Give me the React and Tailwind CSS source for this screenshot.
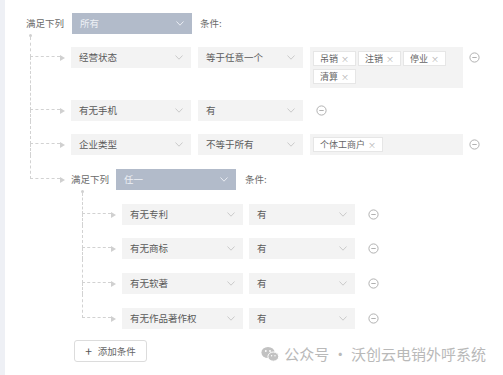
import React from "react";

const font = "font-['Noto_Sans_CJK_SC','Noto_Sans',sans-serif]";

function Chevron({ color = "#c6c6c6" }) {
  return (
    <svg width="8" height="5" viewBox="0 0 8 5">
      <polyline points="0.5,0.5 4,4.2 7.5,0.5" fill="none" stroke={color} strokeWidth="0.9" />
    </svg>
  );
}

function Select({ className, text, blue }) {
  return (
    <div
      className={`flex h-[21px] shrink-0 items-center justify-between pl-[8px] pr-[8px] text-[9.5px] ${
        blue ? "bg-[#b2bbca] text-[#eef1f6]" : "bg-[#f3f3f3] text-[#5a5a5a]"
      } ${className}`}
    >
      <span>{text}</span>
      <Chevron color={blue ? "#eef1f6" : "#c6c6c6"} />
    </div>
  );
}

function Minus() {
  return (
    <svg width="11" height="11" viewBox="0 0 11 11" className="shrink-0">
      <circle cx="5.5" cy="5.5" r="4.6" fill="none" stroke="#a8a8a8" strokeWidth="0.9" />
      <line x1="3.3" y1="5.5" x2="7.7" y2="5.5" stroke="#a8a8a8" strokeWidth="0.9" />
    </svg>
  );
}

function Tag({ text }) {
  return (
    <span className="inline-flex h-[15px] items-center gap-[3px] border border-[#e6e6e6] bg-white px-[6px] text-[9px] text-[#666]">
      {text}
      <span className="text-[8px] text-[#b0b0b0]">×</span>
    </span>
  );
}

function Arrow() {
  return (
    <div className="flex h-[21px] w-[5px] shrink-0 items-center">
      <svg width="5" height="6" viewBox="0 0 5 6">
        <polygon points="0,0 5,3 0,6" fill="#d0d0d0" />
      </svg>
    </div>
  );
}

// one branch of the tree: elbow connector, arrow, then the content
function Branch({ gap, last, lineW, children }) {
  return (
    <div className="flex">
      <div className={`flex shrink-0 flex-col ${lineW}`}>
        <div
          className="border-b border-l border-dashed border-[#d2d2d2]"
          style={{ height: gap + 10 }}
        />
        {!last && <div className="flex-1 border-l border-dashed border-[#d2d2d2]" />}
      </div>
      <div className="flex items-start" style={{ paddingTop: gap }}>
        <Arrow />
        <div className="ml-[6px]">{children}</div>
      </div>
    </div>
  );
}

function Dot() {
  return <div className="-ml-[1px] h-[3px] w-[3px] rounded-full bg-[#d0d0d0]" />;
}

function WeChat() {
  return (
    <svg width="18" height="16" viewBox="0 0 18 16">
      <ellipse cx="7" cy="6.5" rx="6.6" ry="5.6" fill="#c2c2c2" />
      <ellipse cx="12.3" cy="10.6" rx="5.4" ry="4.6" fill="#c2c2c2" stroke="#fff" strokeWidth="1" />
      <circle cx="4.8" cy="5" r="0.9" fill="#fff" />
      <circle cx="9" cy="5" r="0.9" fill="#fff" />
      <circle cx="10.6" cy="9.8" r="0.7" fill="#fff" />
      <circle cx="14" cy="9.8" r="0.7" fill="#fff" />
    </svg>
  );
}

export default function App() {
  return (
    <div className={`relative flex h-[375px] w-[503px] overflow-hidden bg-white ${font}`}>
      <div className="w-[5px] shrink-0 bg-[#eef0f5]" />
      <div className="flex flex-1 flex-col pt-[13px]">
        {/* top group header */}
        <div className="flex items-center pl-[21px]">
          <span className="w-[46px] text-[9.5px] text-[#6a6a6a]">满足下列</span>
          <Select className="w-[120px]" text="所有" blue />
          <span className="ml-[8px] text-[9.5px] text-[#6a6a6a]">条件:</span>
        </div>

        <div className="ml-[25px] flex flex-col">
          <Dot />
          <Branch gap={10} lineW="w-[30px]">
            <div className="flex items-start gap-[7px]">
              <Select className="w-[120px]" text="经营状态" />
              <Select className="w-[105px]" text="等于任意一个" />
              <div className="flex w-[153px] flex-wrap content-start gap-x-[2px] gap-y-[3px] bg-[#f3f3f3] px-[3px] py-[4px]">
                <Tag text="吊销" />
                <Tag text="注销" />
                <Tag text="停业" />
                <Tag text="清算" />
              </div>
              <div className="-ml-[1px] flex h-[21px] items-center">
                <Minus />
              </div>
            </div>
          </Branch>
          <Branch gap={12} lineW="w-[30px]">
            <div className="flex items-center gap-[7px]">
              <Select className="w-[120px]" text="有无手机" />
              <Select className="w-[105px]" text="有" />
              <div className="ml-[6px]">
                <Minus />
              </div>
            </div>
          </Branch>
          <Branch gap={13} lineW="w-[30px]">
            <div className="flex items-center gap-[7px]">
              <Select className="w-[120px]" text="企业类型" />
              <Select className="w-[105px]" text="不等于所有" />
              <div className="flex h-[21px] w-[153px] items-center bg-[#f3f3f3] px-[3px]">
                <Tag text="个体工商户" />
              </div>
              <div className="-ml-[1px]">
                <Minus />
              </div>
            </div>
          </Branch>
          <Branch gap={14} last lineW="w-[30px]">
            <div className="flex flex-col">
              <div className="flex items-center">
                <span className="w-[45px] text-[9.5px] text-[#6a6a6a]">满足下列</span>
                <Select className="w-[120px]" text="任一" blue />
                <span className="ml-[9px] text-[9.5px] text-[#6a6a6a]">条件:</span>
              </div>
              <div className="ml-[11px] flex flex-col">
                <Dot />
                {[
                  ["有无专利", 11, false],
                  ["有无商标", 13, false],
                  ["有无软著", 14, false],
                  ["有无作品著作权", 14, true],
                ].map(([t, g, l]) => (
                  <Branch key={t} gap={g} last={l} lineW="w-[29px]">
                    <div className="flex items-center gap-[6px]">
                      <Select className="w-[121px]" text={t} />
                      <Select className="w-[106px]" text="有" />
                      <div className="ml-[7px]">
                        <Minus />
                      </div>
                    </div>
                  </Branch>
                ))}
              </div>
            </div>
          </Branch>
        </div>

        <button className="ml-[69px] mt-[11px] flex h-[22px] w-[73px] items-center justify-center gap-[6px] rounded-[3px] border border-[#dcdcdc] bg-white text-[9.5px] text-[#666]">
          <span className="text-[12px] leading-none text-[#555]">+</span>
          <span>添加条件</span>
        </button>
      </div>

      {/* watermark */}
      <div className="absolute bottom-[10px] right-[17px] flex items-center gap-[5px] text-[15px] text-[#b9b9b9]">
        <WeChat />
        <span>公众号 · 沃创云电销外呼系统</span>
      </div>
    </div>
  );
}
